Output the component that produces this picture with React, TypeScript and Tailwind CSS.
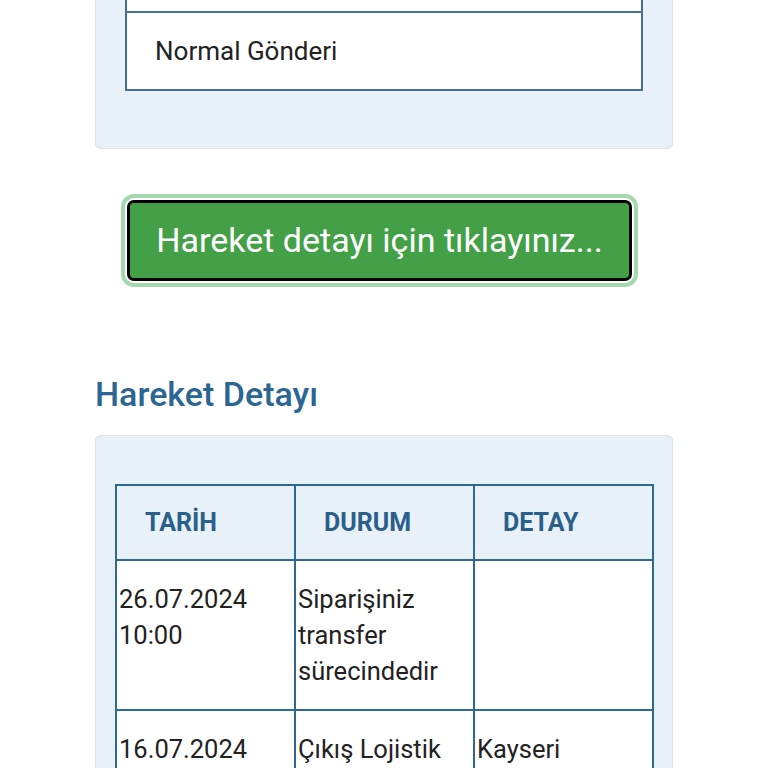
import React from "react";

export default function App() {
  return (
    <div
      className="w-[768px] h-[768px] overflow-hidden bg-white"
      style={{ fontFamily: "Roboto, 'Noto Sans', sans-serif" }}
    >
      <div className="ml-[95px] w-[578px] -mt-[98px]">
        {/* Top card */}
        <div className="bg-[#e9f1f8] border border-[#dde5ec] rounded-[5px] px-[29px] pt-[30px] pb-[57px]">
          <div className="bg-white border-2 border-[#45708f]">
            <div className="h-[78px] border-b-2 border-[#45708f]" />
            <div className="h-[76px] flex items-center pl-[28px] text-[26px] text-[#222]">
              Normal Gönderi
            </div>
          </div>
        </div>

        {/* Button */}
        <div className="mt-[51px] ml-[32px]">
          <button className="w-[505px] h-[81px] bg-[#43a047] border-[3px] border-black rounded-[7px] text-white text-[34px] shadow-[0_0_0_2px_#ffffff,0_0_0_6px_#a3d9ac] flex items-center justify-center">
            Hareket detayı için tıklayınız...
          </button>
        </div>

        {/* Heading */}
        <h2 className="mt-[93px] text-[34px] leading-[40px] font-medium text-[#2b6591]">
          Hareket Detayı
        </h2>

        {/* Second card */}
        <div className="mt-[21px] bg-[#e9f1f8] border border-[#dde5ec] rounded-[5px] px-[19px] pt-[48px] pb-[40px]">
          <table className="w-[537px] border-collapse table-fixed">
            <thead>
              <tr className="h-[75px]">
                <th className="w-[179px] border-2 border-[#2d6a93] text-left pl-[28px] text-[25px] font-bold text-[#2a5f8b]">
                  TARİH
                </th>
                <th className="w-[179px] border-2 border-[#2d6a93] text-left pl-[28px] text-[25px] font-bold text-[#2a5f8b]">
                  DURUM
                </th>
                <th className="w-[179px] border-2 border-[#2d6a93] text-left pl-[28px] text-[25px] font-bold text-[#2a5f8b]">
                  DETAY
                </th>
              </tr>
            </thead>
            <tbody className="bg-white text-[25.5px] leading-[36px] text-[#222]">
              <tr>
                <td className="border-2 border-[#2d6a93] align-top pl-[2px] pr-[4px] pt-[20px] pb-[20px]">
                  26.07.2024
                  <br />
                  10:00
                </td>
                <td className="border-2 border-[#2d6a93] align-top pl-[2px] pr-[4px] pt-[20px] pb-[20px]">
                  Siparişiniz transfer sürecindedir
                </td>
                <td className="border-2 border-[#2d6a93] align-top pl-[2px] pr-[4px] pt-[20px] pb-[20px]"></td>
              </tr>
              <tr>
                <td className="border-2 border-[#2d6a93] align-top pl-[2px] pr-[4px] pt-[20px] pb-[20px]">
                  16.07.2024
                  <br />
                  18:20
                </td>
                <td className="border-2 border-[#2d6a93] align-top pl-[2px] pr-[4px] pt-[20px] pb-[20px]">
                  Çıkış Lojistik Merkezinde
                </td>
                <td className="border-2 border-[#2d6a93] align-top pl-[2px] pr-[4px] pt-[20px] pb-[20px]">
                  Kayseri
                </td>
              </tr>
            </tbody>
          </table>
        </div>
      </div>
    </div>
  );
}
